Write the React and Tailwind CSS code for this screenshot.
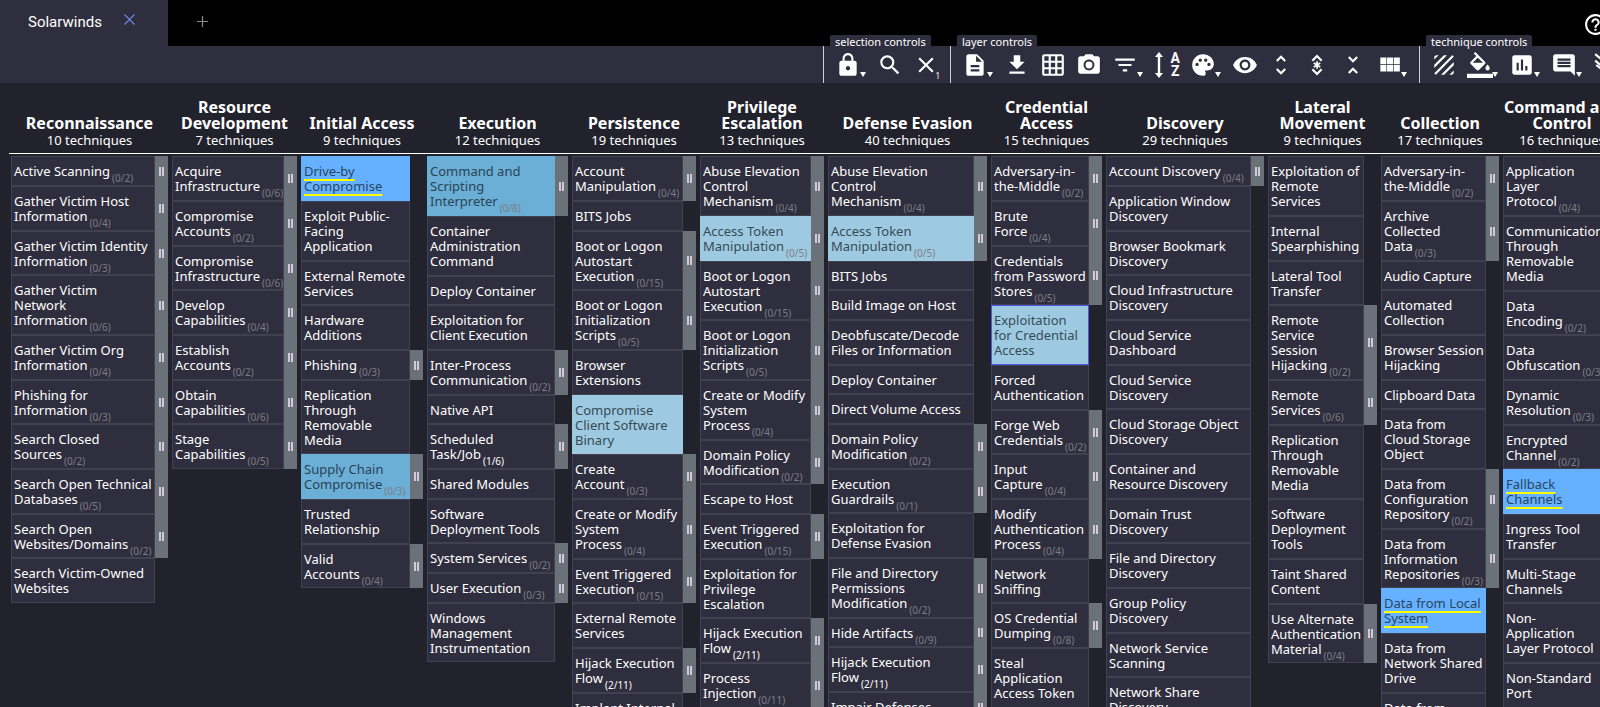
import React, { useState } from 'react';
import clsx from 'clsx';
import {
  MdLock, MdSearch, MdClose, MdDescription, MdFileDownload, MdGridOn, MdPhotoCamera,
  MdFilterList, MdPalette, MdVisibility, MdUnfoldMore, MdUnfoldLess,
  MdTexture, MdInsertChart, MdComment, MdHelpOutline,
} from 'react-icons/md';

// technique: [name, subtechnique count, score color]
const tactics = [
  {
    name: 'Reconnaissance', count: 10, width: 'w-[157px]',
    techniques: [
      ['Active Scanning', '0/2'],
      ['Gather Victim Host\nInformation', '0/4'],
      ['Gather Victim Identity\nInformation', '0/3'],
      ['Gather Victim\nNetwork\nInformation', '0/6'],
      ['Gather Victim Org\nInformation', '0/4'],
      ['Phishing for\nInformation', '0/3'],
      ['Search Closed\nSources', '0/2'],
      ['Search Open Technical\nDatabases', '0/5'],
      ['Search Open\nWebsites/Domains', '0/2'],
      ['Search Victim-Owned\nWebsites'],
    ],
  },
  {
    name: 'Resource\nDevelopment', count: 7, width: 'w-[125px]',
    techniques: [
      ['Acquire\nInfrastructure', '0/6'],
      ['Compromise\nAccounts', '0/2'],
      ['Compromise\nInfrastructure', '0/6'],
      ['Develop\nCapabilities', '0/4'],
      ['Establish\nAccounts', '0/2'],
      ['Obtain\nCapabilities', '0/6'],
      ['Stage\nCapabilities', '0/5'],
    ],
  },
  {
    name: 'Initial Access', count: 9, width: 'w-[122px]',
    techniques: [
      ['Drive-by\nCompromise', null, 'blue'],
      ['Exploit Public-\nFacing\nApplication'],
      ['External Remote\nServices'],
      ['Hardware\nAdditions'],
      ['Phishing', '0/3'],
      ['Replication\nThrough\nRemovable\nMedia'],
      ['Supply Chain\nCompromise', '0/3', 'mid'],
      ['Trusted\nRelationship'],
      ['Valid\nAccounts', '0/4'],
    ],
  },
  {
    name: 'Execution', count: 12, width: 'w-[141px]',
    techniques: [
      ['Command and\nScripting\nInterpreter', '0/8', 'mid'],
      ['Container\nAdministration\nCommand'],
      ['Deploy Container'],
      ['Exploitation for\nClient Execution'],
      ['Inter-Process\nCommunication', '0/2'],
      ['Native API'],
      ['Scheduled\nTask/Job', '1/6'],
      ['Shared Modules'],
      ['Software\nDeployment Tools'],
      ['System Services', '0/2'],
      ['User Execution', '0/3'],
      ['Windows\nManagement\nInstrumentation'],
    ],
  },
  {
    name: 'Persistence', count: 19, width: 'w-[124px]',
    techniques: [
      ['Account\nManipulation', '0/4'],
      ['BITS Jobs'],
      ['Boot or Logon\nAutostart\nExecution', '0/15'],
      ['Boot or Logon\nInitialization\nScripts', '0/5'],
      ['Browser\nExtensions'],
      ['Compromise\nClient Software\nBinary', null, 'light'],
      ['Create\nAccount', '0/3'],
      ['Create or Modify\nSystem\nProcess', '0/4'],
      ['Event Triggered\nExecution', '0/15'],
      ['External Remote\nServices'],
      ['Hijack Execution\nFlow', '2/11'],
      ['Implant Internal\nImage'],
    ],
  },
  {
    name: 'Privilege\nEscalation', count: 13, width: 'w-[124px]',
    techniques: [
      ['Abuse Elevation\nControl\nMechanism', '0/4'],
      ['Access Token\nManipulation', '0/5', 'light'],
      ['Boot or Logon\nAutostart\nExecution', '0/15'],
      ['Boot or Logon\nInitialization\nScripts', '0/5'],
      ['Create or Modify\nSystem\nProcess', '0/4'],
      ['Domain Policy\nModification', '0/2'],
      ['Escape to Host'],
      ['Event Triggered\nExecution', '0/15'],
      ['Exploitation for\nPrivilege\nEscalation'],
      ['Hijack Execution\nFlow', '2/11'],
      ['Process\nInjection', '0/11'],
      ['Scheduled\nTask/Job', '1/6'],
    ],
  },
  {
    name: 'Defense Evasion', count: 40, width: 'w-[159px]',
    techniques: [
      ['Abuse Elevation\nControl\nMechanism', '0/4'],
      ['Access Token\nManipulation', '0/5', 'light'],
      ['BITS Jobs'],
      ['Build Image on Host'],
      ['Deobfuscate/Decode\nFiles or Information'],
      ['Deploy Container'],
      ['Direct Volume Access'],
      ['Domain Policy\nModification', '0/2'],
      ['Execution\nGuardrails', '0/1'],
      ['Exploitation for\nDefense Evasion'],
      ['File and Directory\nPermissions\nModification', '0/2'],
      ['Hide Artifacts', '0/9'],
      ['Hijack Execution\nFlow', '2/11'],
      ['Impair Defenses', '0/9'],
    ],
  },
  {
    name: 'Credential\nAccess', count: 15, width: 'w-[111px]',
    techniques: [
      ['Adversary-in-\nthe-Middle', '0/2'],
      ['Brute\nForce', '0/4'],
      ['Credentials\nfrom Password\nStores', '0/5'],
      ['Exploitation\nfor Credential\nAccess', null, 'selected'],
      ['Forced\nAuthentication'],
      ['Forge Web\nCredentials', '0/2'],
      ['Input\nCapture', '0/4'],
      ['Modify\nAuthentication\nProcess', '0/4'],
      ['Network\nSniffing'],
      ['OS Credential\nDumping', '0/8'],
      ['Steal\nApplication\nAccess Token'],
      ['Steal or Forge\nKerberos\nTickets', '0/4'],
    ],
  },
  {
    name: 'Discovery', count: 29, width: 'w-[158px]',
    techniques: [
      ['Account Discovery', '0/4'],
      ['Application Window\nDiscovery'],
      ['Browser Bookmark\nDiscovery'],
      ['Cloud Infrastructure\nDiscovery'],
      ['Cloud Service\nDashboard'],
      ['Cloud Service\nDiscovery'],
      ['Cloud Storage Object\nDiscovery'],
      ['Container and\nResource Discovery'],
      ['Domain Trust\nDiscovery'],
      ['File and Directory\nDiscovery'],
      ['Group Policy\nDiscovery'],
      ['Network Service\nScanning'],
      ['Network Share\nDiscovery'],
    ],
  },
  {
    name: 'Lateral\nMovement', count: 9, width: 'w-[109px]',
    techniques: [
      ['Exploitation of\nRemote\nServices'],
      ['Internal\nSpearphishing'],
      ['Lateral Tool\nTransfer'],
      ['Remote\nService\nSession\nHijacking', '0/2'],
      ['Remote\nServices', '0/6'],
      ['Replication\nThrough\nRemovable\nMedia'],
      ['Software\nDeployment\nTools'],
      ['Taint Shared\nContent'],
      ['Use Alternate\nAuthentication\nMaterial', '0/4'],
    ],
  },
  {
    name: 'Collection', count: 17, width: 'w-[118px]',
    techniques: [
      ['Adversary-in-\nthe-Middle', '0/2'],
      ['Archive\nCollected\nData', '0/3'],
      ['Audio Capture'],
      ['Automated\nCollection'],
      ['Browser Session\nHijacking'],
      ['Clipboard Data'],
      ['Data from\nCloud Storage\nObject'],
      ['Data from\nConfiguration\nRepository', '0/2'],
      ['Data from\nInformation\nRepositories', '0/3'],
      ['Data from Local\nSystem', null, 'blue'],
      ['Data from\nNetwork Shared\nDrive'],
      ['Data from\nRemovable\nMedia'],
    ],
  },
  {
    name: 'Command and\nControl', count: 16, width: 'w-[118px]',
    techniques: [
      ['Application\nLayer\nProtocol', '0/4'],
      ['Communication\nThrough\nRemovable\nMedia'],
      ['Data\nEncoding', '0/2'],
      ['Data\nObfuscation', '0/3'],
      ['Dynamic\nResolution', '0/3'],
      ['Encrypted\nChannel', '0/2'],
      ['Fallback\nChannels', null, 'blue'],
      ['Ingress Tool\nTransfer'],
      ['Multi-Stage\nChannels'],
      ['Non-\nApplication\nLayer Protocol'],
      ['Non-Standard\nPort'],
      ['Protocol\nTunneling'],
    ],
  },
];

const cellColors = {
  none: 'border-[#41414f] bg-[#2f2e3e] text-white',
  blue: 'border-[#66b1ff] bg-[#66b1ff] text-[#29445f]',
  mid: 'border-[#6baed6] bg-[#6baed6] text-[#2a4454]',
  light: 'border-[#9ecae1] bg-[#9ecae1] text-[#364a54]',
  selected: 'border-[#4f55e6] bg-[#9ecae1] text-[#364a54]',
};

const Technique = ({ name, subs, color = 'none' }) => (
  <li className="group flex">
    <div
      className={clsx(
        'min-w-0 flex-1 border pt-[7px] pb-[6px] pl-[2px] text-[13px] leading-[15px] whitespace-pre group-nth-[3n]:pb-[5px]',
        cellColors[color]
      )}
    >
      <span className={clsx(color === 'blue' && 'underline decoration-[#ffff00] decoration-2 underline-offset-3 [text-decoration-skip-ink:none]')}>
        {name}
      </span>
      {subs && (
        <sub className={clsx('relative top-[6px] bottom-auto ml-[2px] align-baseline text-[10px] leading-[10px]', subs[0] === '0' ? 'text-[#7d7d85]' : 'text-white')}>
          ({subs})
        </sub>
      )}
    </div>
    {subs ? (
      <button className="flex w-[13px] shrink-0 items-center justify-center gap-px bg-[#6a7179]" aria-label="Toggle sub-techniques">
        <span className="h-[9px] w-[2px] bg-[#d3c9d8]" />
        <span className="h-[9px] w-[2px] bg-[#d3c9d8]" />
      </button>
    ) : (
      <div className="w-[13px] shrink-0" />
    )}
  </li>
);

const Caret = () => (
  <svg className="absolute right-[6px] bottom-[6px] h-[5px] w-[6px]" viewBox="0 0 6 5" fill="currentColor">
    <path d="M0 0h6L3 5z" />
  </svg>
);

const Tool = ({ label, icon: Icon, caret, badge }) => (
  <button aria-label={label} className={clsx('relative flex h-[37px] shrink-0 items-center pl-[5px]', caret ? 'w-[42px]' : 'w-[36px]')}>
    <Icon className="size-[26px]" />
    {caret && <Caret />}
    {badge && <span className="absolute right-[4px] bottom-[2px] text-[8px] leading-[10px]">{badge}</span>}
  </button>
);

const ToolGroup = ({ label, children, last }) => (
  <div className={clsx('relative flex h-[37px] shrink-0 border-l border-[#d0d0d8] pl-[6px]', !last && 'pr-[6px]')}>
    <span className="absolute bottom-[34px] left-[6px] rounded-t-[2px] bg-[#2f2e3e] px-[5px] text-[11px] leading-[14px] whitespace-nowrap">
      {label}
    </span>
    {children}
  </div>
);

const SortIcon = () => (
  <span className="flex w-[26px] items-center justify-between">
    <svg className="h-[26px] w-[10px]" viewBox="0 0 10 26" fill="currentColor">
      <path d="M5 0l4 5H6.2v16H9l-4 5-4-5h2.8V5H1z" />
    </svg>
    <span className="flex flex-col text-center font-['Roboto'] text-[14px] leading-[13px] font-bold">
      <span>A</span>
      <span>Z</span>
    </span>
  </span>
);

const FillIcon = ({ className }) => (
  <svg className={className} viewBox="0 0 24 24" fill="currentColor">
    <path d="M16.56 8.94L7.62 0 6.21 1.41l2.38 2.38-5.15 5.15c-.59.59-.59 1.54 0 2.12l5.5 5.5c.29.29.68.44 1.06.44s.77-.15 1.06-.44l5.5-5.5c.59-.58.59-1.53 0-2.12zM5.21 10L10 5.21 14.79 10H5.21zM19 11.5s-2 2.17-2 3.5c0 1.1.9 2 2 2s2-.9 2-2c0-1.33-2-3.5-2-3.5zM0 20h24v4H0z" />
  </svg>
);

const ModuleIcon = ({ className }) => (
  <svg className={className} viewBox="0 0 24 24" fill="currentColor">
    <path d="M4 11.1h5.6V5H4zM4 18h5.6v-6.2H4zM10.2 18h5.6v-6.2h-5.6zM16.4 18H22v-6.2h-5.6zM10.2 11.1h5.6V5h-5.6zM16.4 5v6.1H22V5z" />
  </svg>
);

// chevrons up and down with an asterisk between them
const ExpandAnnotatedIcon = ({ className }) => (
  <svg className={className} viewBox="0 0 24 24" fill="none" stroke="currentColor" strokeWidth="2">
    <path d="M7.7 8L12 3.7 16.3 8M7.7 16l4.3 4.3 4.3-4.3" />
    <path d="M12 8.6v6.8M9 10.2l6 3.6M15 10.2l-6 3.6" strokeWidth="1.6" />
  </svg>
);

const HideIcon = ({ className }) => (
  <svg className={className} viewBox="0 0 24 24" fill="none" stroke="currentColor" strokeWidth="2">
    <path d="M2 2l5 4 4-4M2 8l5 4 4-4M3 12l8 6" />
  </svg>
);

const TabBar = () => (
  <header className="flex h-[46px] bg-black font-['Roboto',sans-serif]">
    <div className="flex w-[168px] shrink-0 items-start bg-[#2f2e3e] pl-[28px]">
      <button className="pt-[11px] text-[15px] leading-[22px]">Solarwinds</button>
      <button aria-label="Close tab" className="mt-[14px] ml-[22px] text-[#6c83e0]">
        <svg className="size-[11px]" viewBox="0 0 11 11" stroke="currentColor" strokeWidth="1.3">
          <path d="M.5.5l10 10M10.5.5l-10 10" />
        </svg>
      </button>
    </div>
    <button aria-label="Add tab" className="mt-[16px] ml-[29px] h-[11px] text-[#8a8a8a]">
      <svg className="size-[11px]" viewBox="0 0 11 11" stroke="currentColor" strokeWidth="1.2">
        <path d="M5.5 0v11M0 5.5h11" />
      </svg>
    </button>
    <button aria-label="Help" className="mt-[12px] -mr-[8px] ml-auto h-[25px]">
      <MdHelpOutline className="size-[25px]" />
    </button>
  </header>
);

const Toolbar = () => (
  <nav className="-mr-[24px] flex h-[37px] justify-end bg-[#2f2e3e]">
    <ToolGroup label="selection controls">
      <Tool label="Lock selection" icon={MdLock} caret />
      <Tool label="Search" icon={MdSearch} />
      <Tool label="Deselect" icon={MdClose} badge="1" />
    </ToolGroup>
    <ToolGroup label="layer controls">
      <Tool label="Layer information" icon={MdDescription} caret />
      <Tool label="Download" icon={MdFileDownload} />
      <Tool label="Export to excel" icon={MdGridOn} />
      <Tool label="Render to SVG" icon={MdPhotoCamera} />
      <Tool label="Filters" icon={MdFilterList} caret />
      <Tool label="Sorting" icon={SortIcon} />
      <Tool label="Color setup" icon={MdPalette} caret />
      <Tool label="Show disabled" icon={MdVisibility} />
      <Tool label="Expand sub-techniques" icon={MdUnfoldMore} />
      <Tool label="Expand annotated" icon={ExpandAnnotatedIcon} />
      <Tool label="Collapse sub-techniques" icon={MdUnfoldLess} />
      <Tool label="Matrix layout" icon={ModuleIcon} caret />
    </ToolGroup>
    <ToolGroup label="technique controls" last>
      <Tool label="Toggle state" icon={MdTexture} />
      <Tool label="Background color" icon={FillIcon} caret />
      <Tool label="Scoring" icon={MdInsertChart} caret />
      <Tool label="Comment" icon={MdComment} caret />
      <Tool label="Clear annotations" icon={HideIcon} />
    </ToolGroup>
  </nav>
);

const App = () => {
  const [columns] = useState(tactics);

  return (
    <div className="h-screen overflow-hidden bg-[#22222c] font-['Noto_Sans',sans-serif] text-white">
      <TabBar />
      <Toolbar />
      <main className="pl-[9px]">
        <table className="border-separate border-spacing-0">
          <thead>
            <tr>
              {columns.map(t => (
                <th key={t.name} className="h-[71px] border-b border-white px-[2px] pb-[4px] align-bottom whitespace-pre">
                  <div className="text-[16px] leading-[16px] font-bold">{t.name}</div>
                  <div className="text-[13px] leading-[18px] font-normal">{t.count} techniques</div>
                </th>
              ))}
            </tr>
          </thead>
          <tbody>
            <tr>
              {columns.map(t => (
                <td key={t.name} className="px-[2px] pt-[2px] align-top">
                  <ul className={t.width}>
                    {t.techniques.map(([name, subs, color]) => (
                      <Technique key={name} name={name} subs={subs} color={color} />
                    ))}
                  </ul>
                </td>
              ))}
            </tr>
          </tbody>
        </table>
      </main>
    </div>
  );
};

export default App;
